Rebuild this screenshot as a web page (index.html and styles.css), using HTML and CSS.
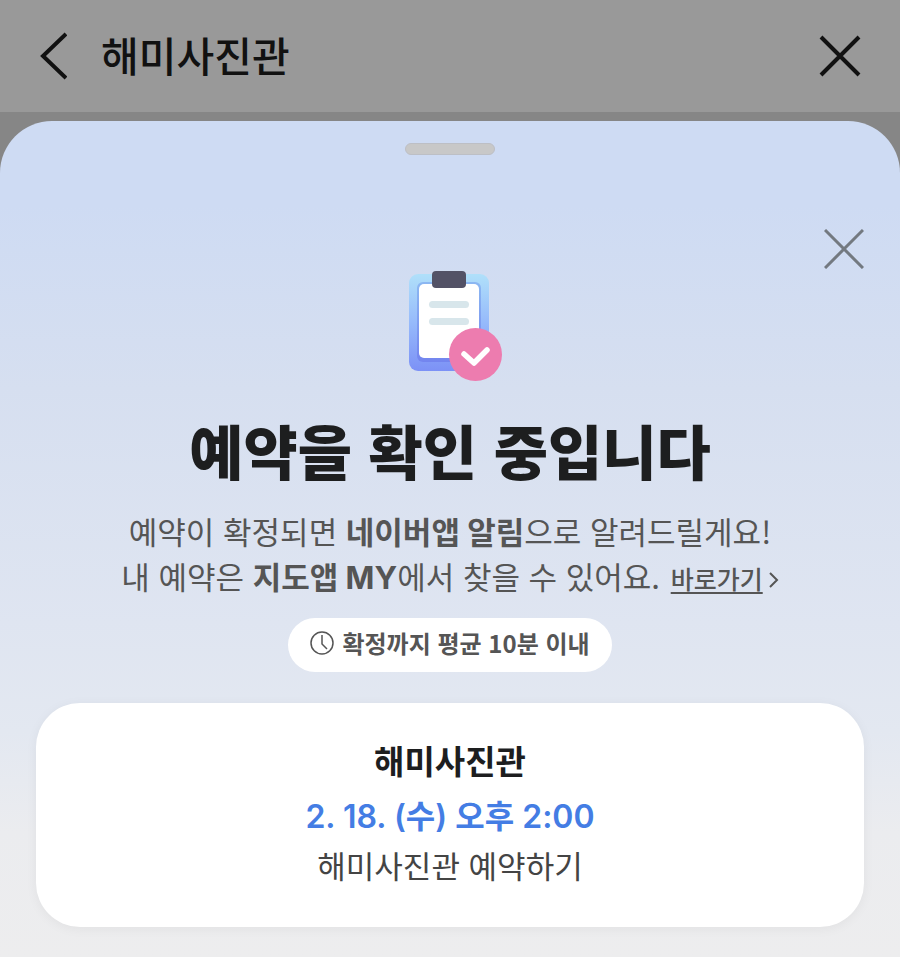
FILE: index.html
```html
<!DOCTYPE html>
<html lang="ko">
<head>
    <meta charset="UTF-8">
    <meta name="viewport" content="width=device-width, initial-scale=1.0">
    <title>해미사진관</title>
    <link rel="stylesheet" href="styles.css">
</head>
<body>
    <header class="app-bar">
        <button type="button" class="icon-button" aria-label="뒤로">
            <svg width="28" height="48" viewBox="0 0 28 48" fill="none" stroke="#111" stroke-width="4">
                <path d="M27 2 4 24l23 22"/>
            </svg>
        </button>
        <h1 class="app-title">해미사진관</h1>
        <button type="button" class="icon-button" aria-label="닫기">
            <svg width="42" height="42" viewBox="0 0 42 42" fill="none" stroke="#111" stroke-width="4">
                <path d="M2 2l38 38M40 2L2 40"/>
            </svg>
        </button>
    </header>

    <main class="sheet">
        <div class="handle"></div>
        <button type="button" class="icon-button sheet-close" aria-label="창 닫기">
            <svg width="40" height="40" viewBox="0 0 40 40" fill="none" stroke="#737980" stroke-width="3">
                <path d="M1 1l38 38M39 1L1 39"/>
            </svg>
        </button>

        <svg class="clipboard" width="96" height="112" viewBox="0 0 96 112">
            <defs>
                <linearGradient id="board" x1="0" y1="0" x2="0" y2="1">
                    <stop offset="0" stop-color="#b0e0fa"/>
                    <stop offset="0.5" stop-color="#96bafb"/>
                    <stop offset="1" stop-color="#7c91f6"/>
                </linearGradient>
                <linearGradient id="edge" x1="0" y1="0" x2="0" y2="1">
                    <stop offset="0" stop-color="#8cb8f2"/>
                    <stop offset="1" stop-color="#7385ef"/>
                </linearGradient>
            </defs>
            <rect x="3" y="4" width="80" height="97" rx="9" fill="url(#board)"/>
            <rect x="11" y="12" width="64" height="80" rx="6" fill="url(#edge)"/>
            <rect x="13" y="14" width="60" height="74" rx="5" fill="#fff"/>
            <rect x="26" y="1" width="34" height="17" rx="4" fill="#535266"/>
            <rect x="23" y="31" width="40" height="7" rx="3.5" fill="#d8e6eb"/>
            <rect x="23" y="48" width="40" height="7" rx="3.5" fill="#d8e6eb"/>
            <circle cx="69.5" cy="84.5" r="26.5" fill="#ed7caf"/>
            <path d="M58 84l10 9 13-13" fill="none" stroke="#fff" stroke-width="5.5" stroke-linecap="round" stroke-linejoin="round"/>
        </svg>

        <h2 class="title">예약을 확인 중입니다</h2>
        <p class="desc">
            예약이 확정되면 <strong>네이버앱 알림</strong>으로 알려드릴게요!<br>
            내 예약은 <strong>지도앱 MY</strong>에서 찾을 수 있어요.
            <a href="#" class="shortcut"><span>바로가기</span><svg width="11" height="18" viewBox="0 0 11 18" fill="none" stroke="#555" stroke-width="2"><path d="M2 2l7 7-7 7"/></svg></a>
        </p>

        <div class="notice">
            <svg width="24" height="24" viewBox="0 0 24 24" fill="none" stroke="#555" stroke-width="1.5">
                <circle cx="12" cy="12" r="11"/>
                <path d="M12 4v9l5 5"/>
            </svg>
            <span>확정까지 평균 10분 이내</span>
        </div>

        <section class="card">
            <h3 class="card-name">해미사진관</h3>
            <p class="card-date">2. 18. (수) 오후 2:00</p>
            <p class="card-item">해미사진관 예약하기</p>
        </section>
    </main>
</body>
</html>
```
FILE: styles.css
```css
* {
    box-sizing: border-box;
}
body {
    display: flex;
    flex-direction: column;
    min-height: 100vh;
    margin: 0;
    background-color: #868686;
    color: #1d1e1f;
    font-family: "Noto Sans CJK KR", sans-serif;
}
h1, h2, h3, p {
    margin: 0;
}
.icon-button {
    display: flex;
    padding: 0;
    border: none;
    background: none;
    cursor: pointer;
}
.app-bar {
    display: flex;
    align-items: center;
    height: 112px;
    padding: 0 39px;
    background-color: #999;
}
.app-title {
    flex: 1;
    margin-left: 34px;
    padding-bottom: 4px;
    color: #111;
    font-size: 41px;
    font-weight: 500;
    line-height: 60px;
}
.sheet {
    position: relative;
    display: flex;
    flex: 1;
    flex-direction: column;
    align-items: center;
    margin-top: 9px;
    padding: 22px 36px 30px;
    border-radius: 52px 52px 0 0;
    background: linear-gradient(#cedbf3 0%, #cedbf3 10%, #d6dff0 32%, #dfe5f1 60%, #e3e8f1 73%, #ebecef 85%, #ededee 100%);
}
.handle {
    width: 90px;
    height: 12px;
    border: 1px solid #bdbfc5;
    border-radius: 6px;
    background-color: #c8c8c8;
}
.sheet-close {
    position: absolute;
    top: 108px;
    right: 36px;
}
.clipboard {
    margin: 115px 0 0 8px;
}
.title {
    margin-top: 24px;
    font-size: 59px;
    font-weight: 900;
    line-height: 88px;
    text-align: center;
}
.desc {
    margin-top: 14px;
    color: #555;
    font-size: 31px;
    font-weight: 400;
    line-height: 45px;
    text-align: center;
}
.desc strong {
    font-family: Inter, "Noto Sans CJK KR", sans-serif;
    font-weight: 700;
    line-height: 1;
}
.shortcut {
    margin-left: 2px;
    color: #555;
    font-size: 25px;
    font-weight: 500;
    line-height: 1;
    text-decoration: none;
}
.shortcut span {
    text-decoration: underline;
    text-decoration-thickness: 2px;
    text-decoration-skip-ink: none;
    text-underline-offset: 3px;
}
.shortcut svg {
    margin-left: 5px;
}
.notice {
    display: flex;
    align-items: center;
    gap: 8px;
    margin-top: 20px;
    padding: 6px 22px 10px;
    border-radius: 27px;
    background-color: #fff;
    color: #555;
    font-size: 24px;
    font-weight: 700;
    line-height: 38px;
}
.card {
    width: 100%;
    margin-top: 31px;
    padding: 31px 24px 38px;
    border-radius: 44px;
    background-color: #fff;
    box-shadow: 0 2px 12px rgba(0, 0, 0, 0.05);
    text-align: center;
}
.card-name {
    font-size: 33px;
    font-weight: 700;
    line-height: 52px;
}
.card-date {
    margin-top: 6px;
    color: #447de4;
    font-family: Inter, "Noto Sans CJK KR", sans-serif;
    font-size: 32px;
    font-weight: 600;
    line-height: 49px;
}
.card-item {
    color: #444;
    font-size: 31px;
    font-weight: 400;
    line-height: 48px;
}
```
